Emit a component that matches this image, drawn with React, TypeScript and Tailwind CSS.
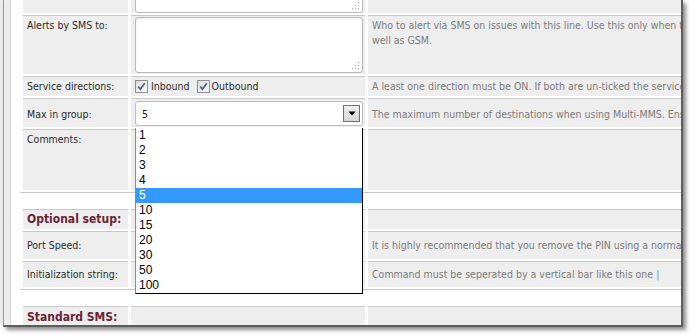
import React from "react";

const Grip = () => (
  <svg width="9" height="9" viewBox="0 0 9 9" className="absolute right-[2px] bottom-[2px]">
    <rect x="7" y="1" width="1.2" height="1.2" fill="#b0b0b0" />
    <rect x="4" y="4" width="1.2" height="1.2" fill="#b0b0b0" />
    <rect x="7" y="4" width="1.2" height="1.2" fill="#b0b0b0" />
    <rect x="1" y="7" width="1.2" height="1.2" fill="#b0b0b0" />
    <rect x="4" y="7" width="1.2" height="1.2" fill="#b0b0b0" />
    <rect x="7" y="7" width="1.2" height="1.2" fill="#b0b0b0" />
  </svg>
);

const Checkbox = () => (
  <div className="w-[13px] h-[13px] border border-[#8e8f8f] bg-gradient-to-br from-[#dcdcdc] to-[#fbfbfb] relative shrink-0">
    <svg width="11" height="11" viewBox="0 0 11 11" className="absolute left-0 top-0">
      <path d="M2.3 5.6 L4.3 8.3 L8.8 2.2" stroke="#4a5f95" strokeWidth="1.7" fill="none" />
    </svg>
  </div>
);

const cell = "bg-[#eeeeee] border-t border-[#c9c9c9]";
const labelCls = `${cell} w-[105px] shrink-0 pl-[4px] pt-[2px] text-[#2b2b2b] whitespace-nowrap`;
const inputCls = `${cell} w-[234px] shrink-0 relative`;
const descCls = `${cell} flex-1 min-w-0 pl-[4px] pt-[2px] text-[#7c7c7c] whitespace-nowrap overflow-hidden`;
const headCls = `${cell} w-[105px] shrink-0 pl-[4px] font-bold text-[12px] leading-[17px] text-[#6a2434] whitespace-nowrap`;

const items = ["1", "2", "3", "4", "5", "10", "15", "20", "30", "50", "100"];

export default function App() {
  return (
    <div className="w-[694px] h-[335px] bg-white overflow-hidden flex font-['DejaVu_Sans_Condensed','Liberation_Sans',sans-serif] text-[10.5px] leading-[15px]">
      <div className="w-[3px] h-[325px] bg-[#ebebeb] shrink-0" />
      <div className="w-[680px] h-[327px] shrink-0 flex border-l border-[#9a9a9a] border-r-2 border-b-2 border-r-[#5c5c5c] border-b-[#5c5c5c] shadow-[3px_3px_4px_rgba(0,0,0,0.45)] overflow-hidden bg-white">
        <div className="w-[7px] shrink-0 bg-[#ececec] border-r border-[#d4d4d4]" />
        <div className="flex-1 min-w-0 pl-[9px]">
          {/* Section 1 */}
          <div className="mt-[-20px] flex flex-col gap-[2px] pb-[2px] border-b border-[#c9c9c9]">
            <div className="flex gap-[3px] pl-[3px] h-[33px]">
              <div className={labelCls} />
              <div className={inputCls}>
                <div className="absolute left-[4px] top-[-1px] w-[228px] h-[33px] bg-white border border-[#b9b9b9] rounded-[3px]">
                  <Grip />
                </div>
              </div>
              <div className={descCls} />
            </div>
            <div className="flex gap-[3px] pl-[3px] h-[59px]">
              <div className={labelCls}>Alerts by SMS to:</div>
              <div className={inputCls}>
                <div className="absolute left-[4px] top-[1px] w-[228px] h-[56px] bg-white border border-[#b9b9b9] rounded-[3px] shadow-[inset_0_1px_2px_rgba(0,0,0,0.08)]">
                  <Grip />
                </div>
              </div>
              <div className={descCls}>
                Who to alert via SMS on issues with this line. Use this only when the line is used for MMS as
                <br />
                well as GSM.
              </div>
            </div>
            <div className="flex gap-[3px] pl-[3px] h-[20px]">
              <div className={`${cell} w-[105px] shrink-0 pl-[4px] text-[#2b2b2b] flex items-center whitespace-nowrap`}>Service directions:</div>
              <div className={`${inputCls} flex items-center pl-[4px]`}>
                <Checkbox />
                <span className="ml-[3px] text-[#2b2b2b]">Inbound</span>
                <div className="ml-[7px]">
                  <Checkbox />
                </div>
                <span className="ml-[2px] text-[#2b2b2b]">Outbound</span>
              </div>
              <div className={`${cell} flex-1 min-w-0 pl-[4px] text-[#7c7c7c] whitespace-nowrap overflow-hidden flex items-center`}>
                A least one direction must be ON. If both are un-ticked the service is disabled.
              </div>
            </div>
            <div className="flex gap-[3px] pl-[3px] h-[29px]">
              <div className={`${cell} w-[105px] shrink-0 pl-[4px] pt-[8px] text-[#2b2b2b] whitespace-nowrap`}>Max in group:</div>
              <div className={inputCls}>
                <div className="absolute left-[4px] top-[2px] w-[228px] h-[25px] bg-white border border-[#bdbdbd] rounded-[3px] flex items-center justify-between pl-[6px] pr-[2px]">
                  <span className="text-[#1a1a1a] pt-[2px]">5</span>
                  <div className="w-[17px] h-[17px] border border-[#707070] bg-gradient-to-b from-[#f0f0f0] to-[#d6d6d6] flex items-center justify-center">
                    <svg width="8" height="5" viewBox="0 0 8 5">
                      <path d="M0.5 0.5 L7.5 0.5 L4 4.5 Z" fill="#000" />
                    </svg>
                  </div>
                </div>
                <div className="absolute left-[4px] top-[29px] w-[228px] h-[166px] z-10 bg-white border-l border-l-[#8a8a8a] border-r border-r-black border-b border-b-black font-['Liberation_Sans',sans-serif] text-[12px] leading-[15px]">
                  {items.map((it) => (
                    <div
                      key={it}
                      className={
                        it === "5"
                          ? "h-[15px] pl-[3px] bg-[#3399ff] text-white"
                          : "h-[15px] pl-[3px] text-black"
                      }
                    >
                      {it}
                    </div>
                  ))}
                </div>
              </div>
              <div className={`${cell} flex-1 min-w-0 pl-[4px] pt-[8px] text-[#7c7c7c] whitespace-nowrap overflow-hidden`}>
                The maximum number of destinations when using Multi-MMS. Ensure the operator supports it.
              </div>
            </div>
            <div className="flex gap-[3px] pl-[3px] h-[61px]">
              <div className={labelCls}>Comments:</div>
              <div className={inputCls} />
              <div className={descCls} />
            </div>
          </div>

          {/* Section 2 */}
          <div className="mt-[16px] flex flex-col gap-[2px] pb-[2px] border-b border-[#c9c9c9]">
            <div className="flex gap-[3px] pl-[3px] h-[20px]">
              <div className={`${headCls} pt-[1px]`}>Optional setup:</div>
              <div className={inputCls} />
              <div className={descCls} />
            </div>
            <div className="flex gap-[3px] pl-[3px] h-[28px]">
              <div className={`${cell} w-[105px] shrink-0 pl-[4px] text-[#2b2b2b] flex items-center whitespace-nowrap`}>Port Speed:</div>
              <div className={inputCls} />
              <div className={`${cell} flex-1 min-w-0 pl-[4px] text-[#7c7c7c] whitespace-nowrap overflow-hidden flex items-center`}>
                It is highly recommended that you remove the PIN using a normal phone before use.
              </div>
            </div>
            <div className="flex gap-[3px] pl-[3px] h-[26px]">
              <div className={`${cell} w-[105px] shrink-0 pl-[4px] text-[#2b2b2b] flex items-center whitespace-nowrap`}>Initialization string:</div>
              <div className={inputCls} />
              <div className={`${cell} flex-1 min-w-0 pl-[4px] text-[#7c7c7c] whitespace-nowrap overflow-hidden flex items-center`}>
                <span>
                  Command must be seperated by a vertical bar like this one <span className="text-[#5b9bd5]">|</span>
                </span>
              </div>
            </div>
          </div>

          {/* Section 3 */}
          <div className="mt-[16px] flex flex-col">
            <div className="flex gap-[3px] pl-[3px] h-[25px]">
              <div className={`${headCls} pt-[2px]`}>Standard SMS:</div>
              <div className={inputCls} />
              <div className={descCls} />
            </div>
          </div>
        </div>
      </div>
    </div>
  );
}
